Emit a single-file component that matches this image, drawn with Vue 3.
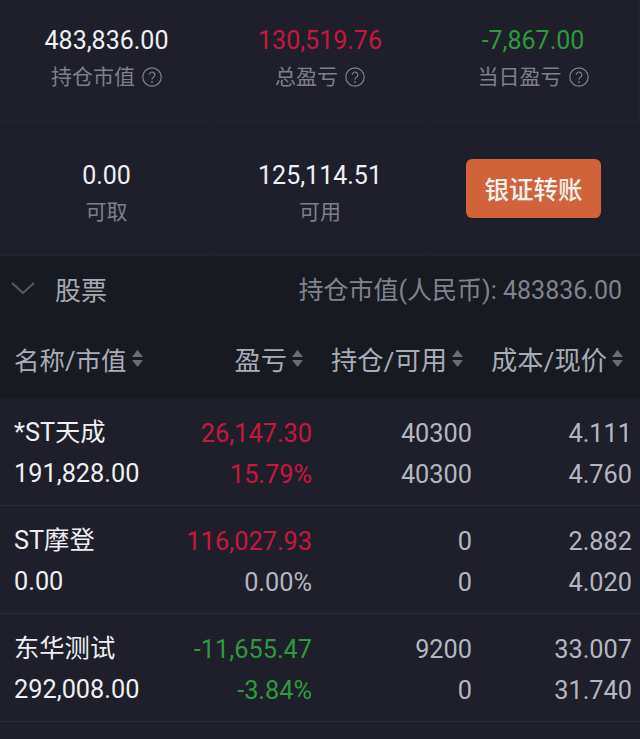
<template>
  <div class="page">
    <div class="summary">
      <div v-for="c in cards" :key="c.label" class="cell" :class="c.row">
        <div class="val" :class="c.tone">{{ c.value }}</div>
        <div class="lbl">
          {{ c.label }}
          <svg v-if="c.help" class="help" width="20" height="20" viewBox="0 0 20 20">
            <circle cx="10" cy="10" r="9.2" fill="none" stroke="#7d818d" stroke-width="1.2" />
            <path d="M7.2 7.8a2.8 2.8 0 1 1 4.3 2.4c-1 .6-1.5 1.1-1.5 2.2" fill="none" stroke="#7d818d" stroke-width="1.2" />
            <circle cx="10" cy="15" r=".9" fill="#7d818d" />
          </svg>
        </div>
      </div>
      <div class="cell btn-cell">
        <button class="transfer">银证转账</button>
      </div>
    </div>

    <div class="head">
      <div class="section">
        <svg class="chev" width="24" height="14" viewBox="0 0 24 14">
          <path d="M1 2l11 10L23 2" fill="none" stroke="#585b64" stroke-width="2" />
        </svg>
        <span class="section-name">股票</span>
        <span class="section-total">持仓市值(人民币): 483836.00</span>
      </div>
      <div class="cols">
        <div v-for="h in headers" :key="h" class="col-h">
          {{ h }}
          <svg class="sort" width="13" height="19" viewBox="0 0 13 19">
            <path d="M6.5 1l5.5 7H1z" fill="#6a6d75" />
            <path d="M6.5 18l5.5-7H1z" fill="#6a6d75" />
          </svg>
        </div>
      </div>
    </div>

    <div v-for="r in rows" :key="r.name" class="row">
      <div class="c name">
        <div>{{ r.name }}</div>
        <div>{{ r.mv }}</div>
      </div>
      <div class="c num">
        <div :class="r.tone">{{ r.pl }}</div>
        <div :class="r.pctTone">{{ r.pct }}</div>
      </div>
      <div class="c num dim">
        <div>{{ r.hold }}</div>
        <div>{{ r.avail }}</div>
      </div>
      <div class="c num dim">
        <div>{{ r.cost }}</div>
        <div>{{ r.price }}</div>
      </div>
    </div>
  </div>
</template>

<script setup>
const cards = [
  { value: '483,836.00', label: '持仓市值', help: true, row: 'top' },
  { value: '130,519.76', label: '总盈亏', help: true, tone: 'red', row: 'top' },
  { value: '-7,867.00', label: '当日盈亏', help: true, tone: 'green', row: 'top' },
  { value: '0.00', label: '可取', row: 'bottom' },
  { value: '125,114.51', label: '可用', row: 'bottom' },
]

const headers = ['名称/市值', '盈亏', '持仓/可用', '成本/现价']

const rows = [
  { name: '*ST天成', mv: '191,828.00', pl: '26,147.30', pct: '15.79%', tone: 'red', pctTone: 'red', hold: '40300', avail: '40300', cost: '4.111', price: '4.760' },
  { name: 'ST摩登', mv: '0.00', pl: '116,027.93', pct: '0.00%', tone: 'red', pctTone: 'dim', hold: '0', avail: '0', cost: '2.882', price: '4.020' },
  { name: '东华测试', mv: '292,008.00', pl: '-11,655.47', pct: '-3.84%', tone: 'green', pctTone: 'green', hold: '9200', avail: '0', cost: '33.007', price: '31.740' },
]
</script>

<style>
body { background: #1e1f2a; }
</style>

<style scoped>
.page { width: 640px; height: 739px; overflow: hidden; background: #1e1f2a; font-family: Roboto, "Noto Sans CJK SC", sans-serif; }
.summary { display: grid; grid-template-columns: 214px 213px 213px; grid-template-rows: 122px 134px; }
.cell { display: flex; flex-direction: column; align-items: center; border-right: 1px solid #23242e; border-bottom: 1px solid #23242e; }
.cell.top { padding-top: 25px; }
.cell.bottom { padding-top: 38px; }
.val { font-size: 25px; line-height: 32px; color: #eef0f4; }
.lbl { display: flex; align-items: center; gap: 7px; margin-top: 5px; font-size: 21px; line-height: 30px; color: #7d818d; }
.val.red, .red { color: #c8173c; }
.val.green, .green { color: #2f9a3c; }
.btn-cell { border-right: 0; justify-content: center; }
.transfer { width: 135px; height: 59px; border: 0; border-radius: 6px; background: #d0633a; color: #f6f2ee; font: 500 24.5px "Noto Sans CJK SC", sans-serif; }
.head { background: #181a21; height: 142px; }
.section { display: flex; align-items: center; height: 64px; padding: 0 18px 0 11px; }
.chev { flex: none; }
.section-name { margin-left: 20px; font-size: 26px; color: #a6a9b2; }
.section-total { margin-left: auto; font-size: 25px; color: #80838f; }
.cols { display: grid; grid-template-columns: 170px 134px 160px 160px; height: 76px; }
.col-h { display: flex; align-items: center; justify-content: flex-end; gap: 4px; font-size: 26.3px; color: #a9acb8; white-space: nowrap; }
.col-h:first-child { justify-content: flex-start; padding-left: 14px; font-size: 25.5px; }
.sort { flex: none; }
.row { display: grid; grid-template-columns: 158px 140px 160px 160px; height: 108px; border-bottom: 1px solid #2a2c35; padding: 15px 0 0 14px; box-sizing: border-box; }
.c div { font-size: 25.3px; line-height: 41px; white-space: nowrap; }
.name { color: #eef0f4; margin-top: -1px; }
.num { text-align: right; }
.dim { color: #b4b7c1; }
</style>
